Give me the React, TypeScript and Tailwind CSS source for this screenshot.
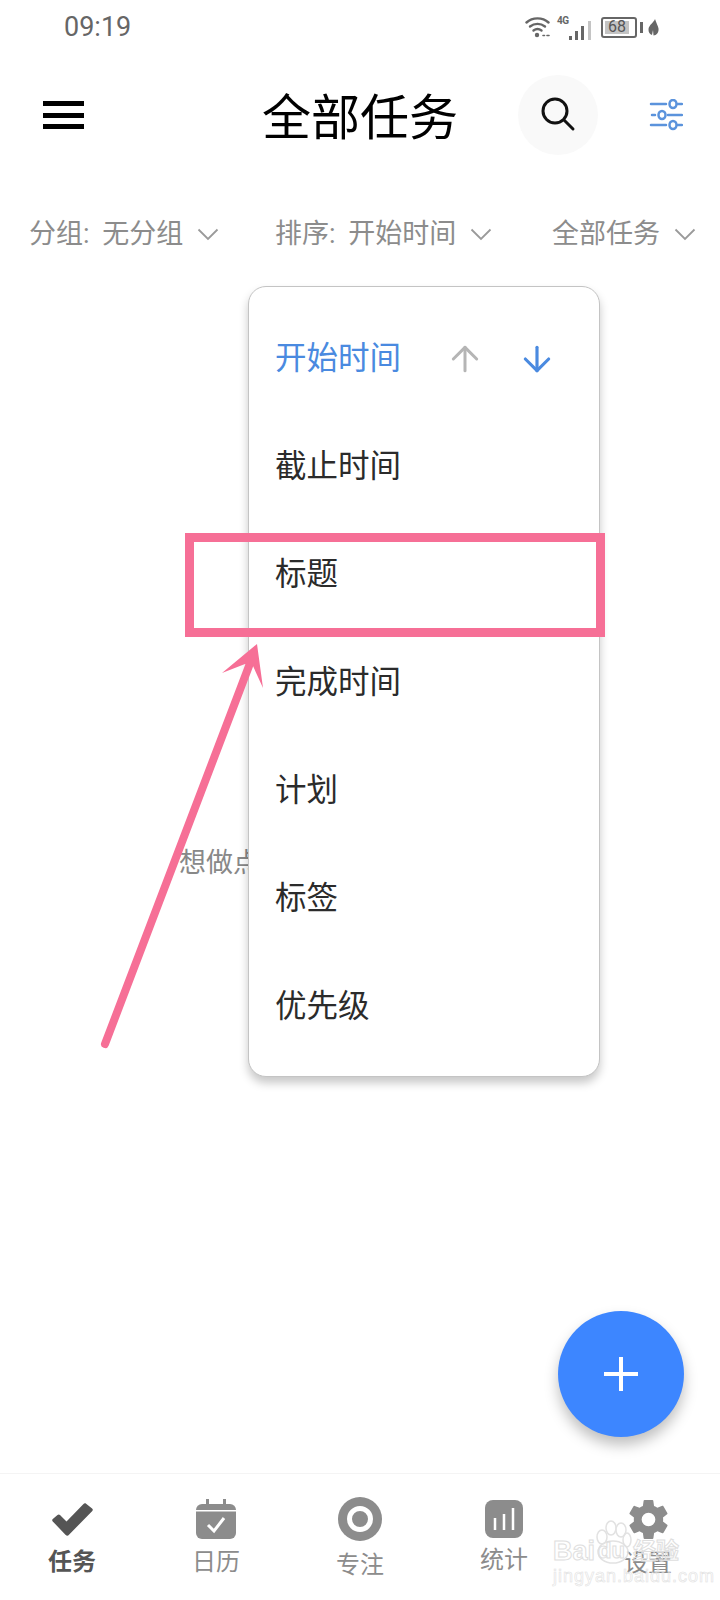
import { ArrowDown, ArrowUp } from "lucide-react";

const CJK = "font-['Roboto','Noto_Sans_CJK_SC',sans-serif]";

function StatusIcons() {
  return (
    <div className="flex items-center">
      <svg width="25" height="22" viewBox="0 0 25 22" fill="none" stroke="#666" strokeWidth="2.400" strokeLinecap="round">
        <path d="M1.500 6.500C7.500 1 17.500 1 23.500 6.500" />
        <path d="M5 10.500C9.500 7 15.500 7 20 10.500" />
        <path d="M8.500 14.500c2.500-1.800 5.500-1.800 8 0" />
        <circle cx="12" cy="19" r="2.200" fill="#666" stroke="none" />
        <path d="M18 19.500h1.500M22 19.500h2" strokeWidth="1.600" />
      </svg>
      <span className="mb-[12px] ml-[7px] w-[11px] text-[10px] leading-none font-bold tracking-[-0.5px] text-[#666]">4G</span>
      <svg width="23" height="19" viewBox="0 0 23 19" className="ml-[1px] mt-[6px]" fill="#666">
        <rect x="0" y="15" width="3" height="4" />
        <rect x="6" y="10" width="3" height="9" />
        <rect x="12" y="5" width="3" height="14" />
        <rect x="19" y="0" width="3" height="19" fill="#c4c4c4" />
      </svg>
      <div className="ml-[9px] flex h-[21px] w-[36px] items-center rounded-[3px] border-2 border-[#666] p-[2px]">
        <div className="flex h-full w-[24px] items-center justify-center bg-[#c4c4c4] text-[16px] leading-none text-[#555]">68</div>
      </div>
      <div className="ml-[3px] h-[11px] w-[3px] bg-[#666]" />
      <svg width="11" height="17" viewBox="0 0 11 17" className="ml-[5px]" fill="#666">
        <path d="M7 0C6 3 1 6 .5 10c-.3 3 1.500 5.500 3.500 6l1-5 .5 5.500c3-.2 5.500-3 5-7C10.200 7 8 3.500 7 0z" />
      </svg>
    </div>
  );
}

function SearchIcon() {
  return (
    <svg width="36" height="36" viewBox="0 0 36 36" fill="none" stroke="#111" strokeWidth="3" strokeLinecap="round">
      <circle cx="15" cy="14" r="12" />
      <path d="M24 23l9 9" />
    </svg>
  );
}

function FilterIcon() {
  return (
    <svg width="34" height="32" viewBox="0 0 34 32" fill="none" stroke="#5b93dc" strokeWidth="2.500" strokeLinecap="round">
      <path d="M2 5h15M29 5h4M3 16h3M19 16h14M2 26h15M29 26h4" />
      <ellipse cx="24" cy="5" rx="3.500" ry="4" />
      <ellipse cx="13" cy="16" rx="3.500" ry="4" />
      <ellipse cx="24" cy="26" rx="3.500" ry="4" />
    </svg>
  );
}

function FilterChip({ label, className }: { label: string; className: string }) {
  return (
    <div className={`flex items-center ${className}`}>
      <span className="text-[27px] leading-none whitespace-nowrap text-[#8c8c8c] [word-spacing:6px]">{label}</span>
      <svg width="22" height="13" viewBox="0 0 22 13" fill="none" stroke="#9a9a9a" strokeWidth="1.800" className="ml-[14px]">
        <path d="M1.500 1.500L11 11l9.500-9.500" />
      </svg>
    </div>
  );
}

const menuItems = ["截止时间", "标题", "完成时间", "计划", "标签", "优先级"];

function SortMenu() {
  return (
    <div className="absolute left-[248px] top-[286px] w-[352px] rounded-[18px] border border-[#c4c4c4] bg-white pt-[18px] pb-[15px] shadow-[0_6px_10px_rgba(0,0,0,0.22)]">
      <div className="flex h-[108px] items-center pl-[26px]">
        <span className="w-[170px] text-[31.500px] leading-none text-[#4a8ae0]">开始时间</span>
        <ArrowUp size={40} strokeWidth={1.800} color="#b5b5b5" />
        <ArrowDown size={40} strokeWidth={1.900} color="#4a8ae0" className="ml-[32px]" />
      </div>
      {menuItems.map((item) => (
        <div key={item} className="flex h-[108px] items-center pl-[26px] text-[31.500px] leading-none text-[#2b2b2b]">
          {item}
        </div>
      ))}
    </div>
  );
}

function Annotation() {
  return (
    <>
      <div className="absolute left-[185px] top-[533px] h-[104px] w-[420px] border-[9px] border-[#f66f96]" />
      <svg className="absolute left-0 top-0" width="720" height="1600" fill="none">
        <path d="M105 1044L249 666" stroke="#f66f96" strokeWidth="8" strokeLinecap="round" />
        <path d="M257 644L222 673L245 664L253 666L263 688Z" fill="#f66f96" />
      </svg>
    </>
  );
}

function CheckIcon() {
  return (
    <svg width="41" height="33" viewBox="0 0 41 33" fill="#555">
      <path d="M.8 18.500c-.8-.8-.8-1.800 0-2.500l4.700-4c.8-.7 1.800-.7 2.500 0l6.500 6.500L31.500 1c.7-.8 1.800-.9 2.600-.2l6 4.600c.9.700 1 1.700.2 2.500L17 31.800c-1 1.200-2.300 1.200-3.300.1z" />
    </svg>
  );
}

function CalendarIcon() {
  return (
    <svg width="40" height="40" viewBox="0 0 40 40" fill="#8c8c8c">
      <rect x="10" y="0" width="3" height="6" />
      <rect x="27" y="0" width="3" height="6" />
      <path d="M0 11a6 6 0 0 1 6-6h28a6 6 0 0 1 6 6v0H0z" />
      <path d="M0 12.500h40V34a6 6 0 0 1-6 6H6a6 6 0 0 1-6-6z" />
      <path d="M12 26l6 6 10-13" fill="none" stroke="#fff" strokeWidth="3" />
    </svg>
  );
}

function FocusIcon() {
  return (
    <svg width="44" height="44" viewBox="0 0 44 44">
      <circle cx="22" cy="22" r="22" fill="#8c8c8c" />
      <circle cx="22" cy="22" r="10.500" fill="none" stroke="#fff" strokeWidth="5" />
    </svg>
  );
}

function StatsIcon() {
  return (
    <svg width="38" height="38" viewBox="0 0 38 38">
      <rect width="38" height="38" rx="8" fill="#8c8c8c" />
      <path d="M10 18v12M19 14v16M28 8v22" stroke="#fff" strokeWidth="2.500" />
    </svg>
  );
}

function GearIcon() {
  return (
    <svg width="47" height="47" viewBox="0 0 24 24" fill="#8c8c8c">
      <path d="M19.400 13c.05-.33.08-.66.08-1s-.03-.67-.08-1l2.100-1.650c.2-.15.25-.42.12-.64l-2-3.460c-.12-.22-.39-.3-.61-.22l-2.490 1c-.52-.4-1.080-.73-1.690-.98l-.38-2.650A.49.490 0 0 0 14 2h-4c-.25 0-.46.18-.49.420l-.38 2.650c-.61.25-1.170.59-1.690.98l-2.490-1c-.23-.09-.49 0-.61.220l-2 3.460c-.13.220-.07.490.12.640L4.570 11c-.05.330-.07.670-.07 1s.02.670.07 1l-2.110 1.650c-.19.150-.25.420-.12.640l2 3.460c.12.220.39.300.61.220l2.490-1c.52.400 1.080.730 1.690.980l.38 2.650c.03.240.240.420.490.420h4c.25 0 .46-.18.49-.42l.38-2.650c.61-.25 1.170-.59 1.690-.98l2.490 1c.23.090.490 0 .61-.22l2-3.460c.12-.22.07-.49-.12-.64zM12 15.500a3.500 3.500 0 1 1 0-7 3.500 3.500 0 0 1 0 7z" />
    </svg>
  );
}

const navItems = [
  { label: "任务", icon: <CheckIcon />, active: true, offset: "mt-[5px]" },
  { label: "日历", icon: <CalendarIcon />, active: false, offset: "mt-[5px]" },
  { label: "专注", icon: <FocusIcon />, active: false, offset: "mt-[8px]" },
  { label: "统计", icon: <StatsIcon />, active: false, offset: "mt-[3px]" },
  { label: "设置", icon: <GearIcon />, active: false, offset: "mt-[6px]" },
];

function BottomNav() {
  return (
    <nav className="grid h-[127px] grid-cols-5 border-t border-[#f4f4f4] pt-[22px]">
      {navItems.map((item) => (
        <div key={item.label} className="flex flex-col items-center">
          <div className="flex h-[46px] items-center justify-center">{item.icon}</div>
          <span className={`${item.offset} text-[24px] leading-[30px] ${item.active ? "font-bold text-[#555]" : "text-[#8c8c8c]"}`}>
            {item.label}
          </span>
        </div>
      ))}
    </nav>
  );
}

function Watermark() {
  return (
    <div className="absolute left-[553px] top-[1537px] font-['Liberation_Sans',sans-serif] text-transparent">
      <svg className="absolute left-[37px] top-[-17px]" width="60" height="60" viewBox="0 0 60 60" fill="none" stroke="#e2e2e2" strokeWidth="1.500">
        <ellipse cx="12" cy="17" rx="5" ry="7" />
        <ellipse cx="21" cy="8" rx="5" ry="7" />
        <ellipse cx="31" cy="10" rx="5" ry="7" />
        <ellipse cx="37" cy="20" rx="4" ry="7" />
        <ellipse cx="23" cy="32" rx="15" ry="11" />
      </svg>
      <div className="relative flex h-[28px] items-center text-[27px] leading-none font-bold [-webkit-text-stroke:1px_#dedede]">
        <span className="w-[45px]">Bai</span>
        <span className="w-[35px] text-[22px]">du</span>
        <span className={`${CJK} text-[23px] leading-none`}>经验</span>
      </div>
      <div className="relative mt-[1px] text-[18px] leading-[20px] tracking-[1px] whitespace-nowrap [-webkit-text-stroke:0.6px_#e2e2e2]">
        jingyan.baidu.com
      </div>
    </div>
  );
}

export default function App() {
  return (
    <div className={`relative flex h-[1600px] w-[720px] flex-col overflow-hidden bg-white ${CJK}`}>
      <div className="flex h-[54px] items-center justify-between pl-[64px] pr-[61px]">
        <span className="font-['Roboto',sans-serif] text-[27px] leading-none text-[#666]">09:19</span>
        <StatusIcons />
      </div>

      <header className="flex h-[122px] items-center pl-[43px]">
        <div className="flex w-[41px] flex-col gap-[6.500px]">
          <div className="h-[5px] bg-black" />
          <div className="h-[5px] bg-black" />
          <div className="h-[5px] bg-black" />
        </div>
        <h1 className="ml-[178px] mt-[6px] w-[197px] text-[49px] leading-none whitespace-nowrap text-black">全部任务</h1>
        <div className="ml-[59px] flex h-[80px] w-[80px] items-center justify-center rounded-full bg-[#f9f9f9]">
          <SearchIcon />
        </div>
        <div className="ml-[51px]">
          <FilterIcon />
        </div>
      </header>

      <div className="flex h-[116px] items-center pl-[29px]">
        <FilterChip label="分组: 无分组" className="w-[246px]" />
        <FilterChip label="排序: 开始时间" className="w-[277px]" />
        <FilterChip label="全部任务" className="" />
      </div>

      <main className="flex flex-1 flex-col items-start">
        <p className="ml-[179px] mt-[558px] text-[27px] leading-none whitespace-nowrap text-[#888]">想做点什么</p>
      </main>

      <BottomNav />

      <SortMenu />
      <Annotation />
      <div className="absolute left-[558px] top-[1311px] flex h-[126px] w-[126px] items-center justify-center rounded-full bg-[#3d86ff] shadow-[0_8px_14px_rgba(0,0,0,0.25)]">
        <div className="relative h-[34px] w-[34px]">
          <div className="absolute left-[15px] top-0 h-[34px] w-[4px] bg-white" />
          <div className="absolute left-0 top-[15px] h-[4px] w-[34px] bg-white" />
        </div>
      </div>
      <Watermark />
    </div>
  );
}
